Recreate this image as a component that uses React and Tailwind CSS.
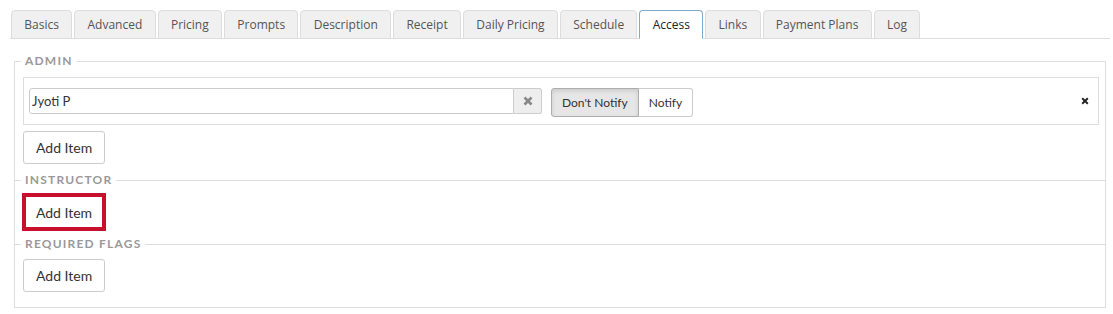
import { useState } from "react";

const tabs = [
  "Basics",
  "Advanced",
  "Pricing",
  "Prompts",
  "Description",
  "Receipt",
  "Daily Pricing",
  "Schedule",
  "Access",
  "Links",
  "Payment Plans",
  "Log",
];

function Times({ className, size = 10, width = 2.6 }) {
  return (
    <svg width={size} height={size} viewBox="0 0 10 10" className={className}>
      <path
        d="M1.5 1.5 L8.5 8.5 M8.5 1.5 L1.5 8.5"
        stroke="currentColor"
        strokeWidth={width}
        fill="none"
      />
    </svg>
  );
}

function Legend({ children }) {
  return (
    <legend className="ml-[6px] px-[4px] text-[12px] leading-[14px] font-bold tracking-[1.2px] text-[#999]">
      {children}
    </legend>
  );
}

function AddItem({ highlight }) {
  if (highlight) {
    return (
      <button
        type="button"
        className="ml-[7px] flex h-[38px] w-[84px] items-center justify-center border-4 border-[#c8102e] bg-white text-[14px] text-[#333]"
      >
        Add Item
      </button>
    );
  }
  return (
    <button
      type="button"
      className="ml-[8px] h-[33px] rounded-[3px] border border-[#ccc] bg-white px-[12px] text-[14px] text-[#333]"
    >
      Add Item
    </button>
  );
}

export default function App() {
  const [active, setActive] = useState("Access");
  const [notify, setNotify] = useState(false);

  return (
    <div className="min-h-[314px] w-[1113px] bg-white pt-[10px] font-['Lato',sans-serif] text-[#333]">
      <ul className="ml-[10px] flex w-[1100px] border-b border-[#ddd] pl-[1px] font-['Open_Sans',sans-serif]">
        {tabs.map((t) => {
          const isActive = t === active;
          return (
            <li
              key={t}
              onClick={() => setActive(t)}
              className={
                isActive
                  ? "-mb-px mr-[2px] cursor-pointer rounded-t-[4px] border border-[#7fa9c9] border-b-white bg-white px-[12.3px] py-[5px] text-[12px] leading-[17px] text-[#222]"
                  : "-mb-px mr-[2px] cursor-pointer rounded-t-[4px] border border-[#ddd] bg-[#f0f0f0] px-[12.3px] py-[5px] text-[12px] leading-[17px] text-[#555]"
              }
            >
              {t}
            </li>
          );
        })}
      </ul>

      <fieldset className="mt-[15px] ml-[14px] w-[1092px] min-w-0 border border-[#ddd] pb-[15px]">
        <Legend>ADMIN</Legend>

        <div className="mt-[9px] ml-[8px] mr-[6px] flex items-start border border-[#ddd] pt-[10px] pb-[7px] pl-[5px] pr-[9px]">
          <div className="flex">
            <input
              defaultValue="Jyoti P"
              className="h-[26px] w-[485px] rounded-l-[3px] border border-[#ccc] px-[2px] text-[13px] text-[#333] outline-none"
            />
            <button
              type="button"
              className="flex h-[26px] w-[28px] items-center justify-center rounded-r-[3px] border border-l-0 border-[#ccc] bg-[#eee] text-[#888]"
            >
              <Times size={10} width={2.6} />
            </button>
          </div>

          <div className="ml-[9px] flex text-[12px]">
            <button
              type="button"
              onClick={() => setNotify(false)}
              className={
                notify
                  ? "h-[29px] rounded-l-[3px] border border-[#ccc] bg-white px-[10px] text-[#333]"
                  : "h-[29px] rounded-l-[3px] border border-[#adadad] bg-[#e6e6e6] px-[10px] text-[#333] shadow-[inset_0_2px_4px_rgba(0,0,0,0.12)]"
              }
            >
              Don't Notify
            </button>
            <button
              type="button"
              onClick={() => setNotify(true)}
              className={
                notify
                  ? "h-[29px] rounded-r-[3px] border border-l-0 border-[#adadad] bg-[#e6e6e6] px-[10px] text-[#333] shadow-[inset_0_2px_4px_rgba(0,0,0,0.12)]"
                  : "h-[29px] rounded-r-[3px] border border-l-0 border-[#ccc] bg-white px-[10px] text-[#333]"
              }
            >
              Notify
            </button>
          </div>

          <button type="button" className="ml-auto mt-[9px] text-[#222]">
            <Times size={8} width={2.4} />
          </button>
        </div>

        <div className="mt-[6px] pb-[9px]">
          <AddItem />
        </div>

        <fieldset className="min-w-0 border-t border-[#ddd] pt-[6px] pb-[6px]">
          <Legend>INSTRUCTOR</Legend>
          <AddItem highlight />
        </fieldset>

        <fieldset className="min-w-0 border-t border-[#ddd] pt-[8px]">
          <Legend>REQUIRED FLAGS</Legend>
          <AddItem />
        </fieldset>
      </fieldset>
    </div>
  );
}
